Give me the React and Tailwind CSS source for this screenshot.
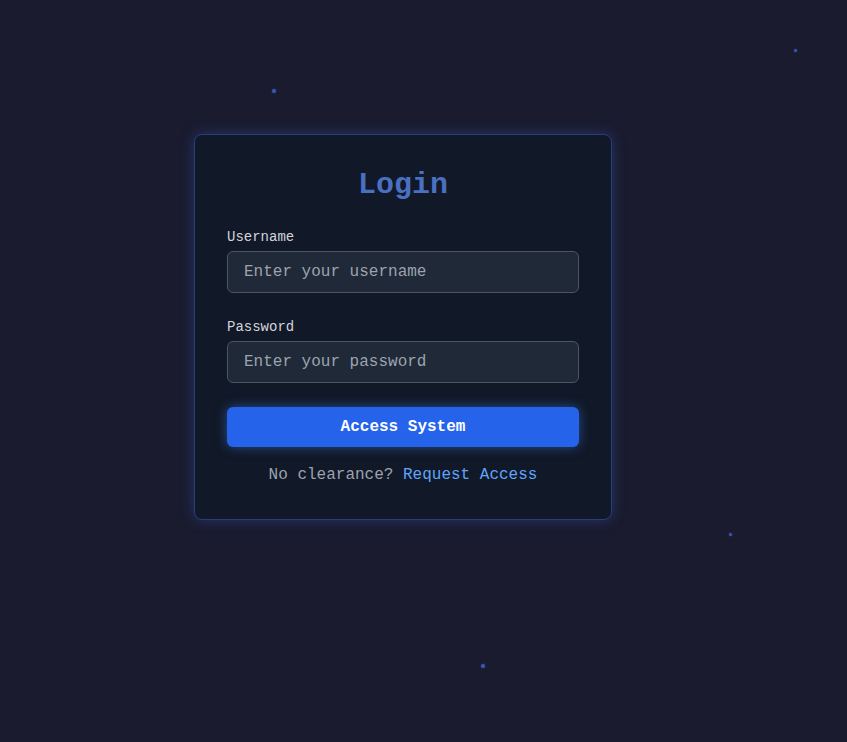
import React from "react";

const dots = [
  { x: 272, y: 89, s: 4 },
  { x: 794, y: 49, s: 3 },
  { x: 729, y: 533, s: 3 },
  { x: 481, y: 664, s: 4 },
];

export default function App() {
  return (
    <div
      className="relative min-h-[742px] w-full overflow-hidden bg-[#1a1b2e]"
      style={{ fontFamily: '"Courier New", Courier, "Nimbus Mono PS", "Nimbus Mono L", FreeMono, "Liberation Mono", monospace' }}
    >
      {dots.map((d, i) => (
        <span
          key={i}
          className="absolute rounded-full bg-[#3b5fc4] opacity-90 shadow-[0_0_2px_rgba(59,95,196,0.8)]"
          style={{ left: d.x, top: d.y, width: d.s, height: d.s }}
        />
      ))}
      <div className="flex pl-[194px] pt-[134px]">
        <div className="w-[418px] rounded-lg border border-[#2a3d78] bg-[#111827] p-8 shadow-[0_0_14px_rgba(59,100,220,0.35)]">
          <h1 className="mb-6 text-center text-3xl font-bold text-[#4a70c2]">Login</h1>
          <div className="mb-6">
            <label className="mb-1 block text-sm text-[#d1d5db]">Username</label>
            <input
              type="text"
              placeholder="Enter your username"
              className="h-[42px] w-full rounded-md border border-[#4b5563] bg-[#1f2937] px-4 text-base text-gray-200 placeholder-[#9ca3af] outline-none"
            />
          </div>
          <div className="mb-6">
            <label className="mb-1 block text-sm text-[#d1d5db]">Password</label>
            <input
              type="password"
              placeholder="Enter your password"
              className="h-[42px] w-full rounded-md border border-[#4b5563] bg-[#1f2937] px-4 text-base text-gray-200 placeholder-[#9ca3af] outline-none"
            />
          </div>
          <button className="h-10 w-full rounded-md bg-[#2563eb] text-base font-bold text-white shadow-[0_0_12px_rgba(59,130,246,0.5)]">
            Access System
          </button>
          <p className="mt-4 text-center text-base leading-6 text-[#9ca3af]">
            No clearance? <a className="text-[#60a5fa]">Request Access</a>
          </p>
        </div>
      </div>
    </div>
  );
}
